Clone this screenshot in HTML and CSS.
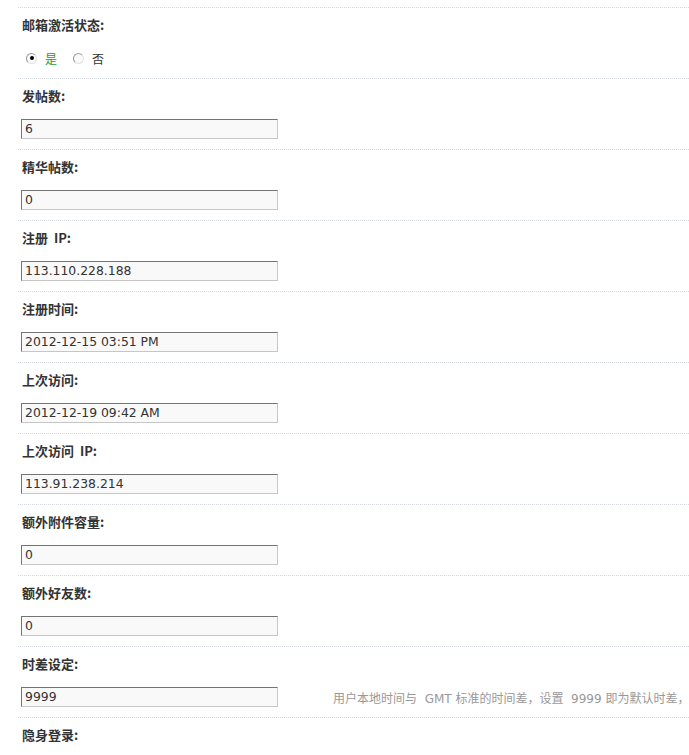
FILE: index.html
```html
<!DOCTYPE html>
<html lang="zh-CN">
<head>
<meta charset="utf-8">
<title>用户编辑</title>
<link rel="stylesheet" href="styles.css">
</head>
<body>
<div class="form">
  <div class="item">
    <div class="label">邮箱激活状态:</div>
    <div class="field radios">
      <label class="radio on"><span class="dot"></span><span class="txt green">是</span></label>
      <label class="radio"><span class="dot"></span><span class="txt">否</span></label>
    </div>
  </div>
  <div class="item">
    <div class="label">发帖数:</div>
    <div class="field"><span class="input">6</span></div>
  </div>
  <div class="item">
    <div class="label">精华帖数:</div>
    <div class="field"><span class="input">0</span></div>
  </div>
  <div class="item">
    <div class="label">注册&nbsp; IP:</div>
    <div class="field"><span class="input">113.110.228.188</span></div>
  </div>
  <div class="item">
    <div class="label">注册时间:</div>
    <div class="field"><span class="input">2012-12-15 03:51 PM</span></div>
  </div>
  <div class="item">
    <div class="label">上次访问:</div>
    <div class="field"><span class="input">2012-12-19 09:42 AM</span></div>
  </div>
  <div class="item">
    <div class="label">上次访问&nbsp; IP:</div>
    <div class="field"><span class="input">113.91.238.214</span></div>
  </div>
  <div class="item">
    <div class="label">额外附件容量:</div>
    <div class="field"><span class="input">0</span></div>
  </div>
  <div class="item">
    <div class="label">额外好友数:</div>
    <div class="field"><span class="input">0</span></div>
  </div>
  <div class="item">
    <div class="label">时差设定:</div>
    <div class="field"><span class="input">9999</span><span class="tip">用户本地时间与&nbsp; GMT 标准的时间差，设置&nbsp; 9999 即为默认时差，</span></div>
  </div>
  <div class="item last">
    <div class="label">隐身登录:</div>
  </div>
</div>
</body>
</html>
```
FILE: styles.css
```css
html, body {
  margin: 0;
  padding: 0;
  background: #fff;
  overflow: hidden;
}
body {
  font-family: "DejaVu Sans", "Noto Sans CJK SC", sans-serif;
  font-size: 12px;
  color: #333;
}
.form {
  padding-top: 7px;
  margin-left: 18px;
  width: 671px;
  overflow: hidden;
}
.item {
  border-top: 1px dotted #d3d9df;
  height: 70px;
}
.item.last {
  height: 37px;
}
.label {
  padding: 6px 0 0 4px;
  height: 34px;
  line-height: 22px;
  font-size: 13px;
  font-family: "Noto Sans CJK SC", sans-serif;
  font-weight: 700;
  color: #333;
}
.field {
  display: flex;
  align-items: center;
  height: 20px;
  padding-left: 3px;
}
.input {
  flex-shrink: 0;
  box-sizing: border-box;
  width: 257px;
  height: 20px;
  line-height: 18px;
  padding-left: 3px;
  background: #f9f9f9;
  border: 1px solid #c6c6c6;
  border-top-color: #747474;
  border-left-color: #747474;
  color: #333;
  font-size: 12.4px;
  white-space: nowrap;
}
.tip {
  flex-shrink: 0;
  margin-left: 55px;
  color: #999;
  white-space: nowrap;
  font-family: "DejaVu Sans", "Noto Sans CJK SC", sans-serif;
}
.radios {
  padding-left: 8px;
}
.radio {
  display: flex;
  align-items: center;
  margin-right: 16px;
}
.dot {
  box-sizing: border-box;
  width: 11px;
  height: 11px;
  border-radius: 50%;
  border: 1px solid #9a9a9a;
  border-right-color: #e2e2e2;
  border-bottom-color: #e2e2e2;
  background: #fafafa;
  position: relative;
}
.radio.on .dot::after {
  content: "";
  position: absolute;
  left: 2.5px;
  top: 2.5px;
  width: 4px;
  height: 4px;
  border-radius: 50%;
  background: #000;
}
.txt {
  margin-left: 8px;
  font-family: "Noto Sans CJK SC", sans-serif;
  color: #333;
}
.txt.green {
  color: #1f9e1a;
}
```
